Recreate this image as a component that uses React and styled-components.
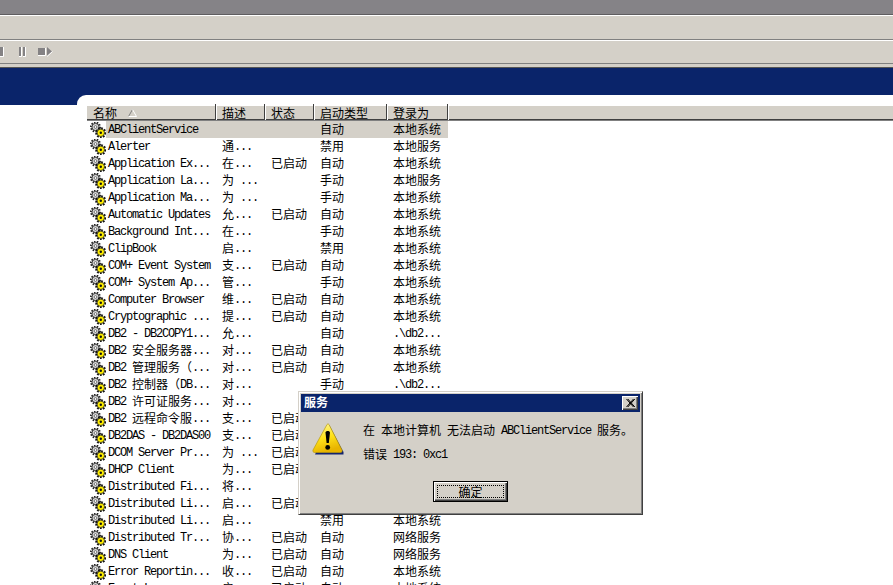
import React from 'react';
import styled, { createGlobalStyle } from 'styled-components';

const CJK = '"Noto Sans CJK SC", "Noto Sans", sans-serif';
const LATIN = '"Liberation Mono", monospace';
const NAVY = '#0a246a';
const FACE = '#d4d0c8';
const COLUMNS = '110px 49px 49px 73px 61px';

const GlobalStyle = createGlobalStyle`
  html, body {
    margin: 0;
    height: 100%;
    overflow: hidden;
    background: #fff;
  }
`;

const Page = styled.div`
  position: relative;
  width: 893px;
  height: 585px;
  overflow: hidden;
  background: #fff;
  color: #000;
  font-family: ${CJK};
  font-size: 12px;
`;

const TitleBand = styled.div`
  height: 14px;
  background: #858387;
  border-bottom: 1px solid #5f5d60;
`;

const MenuBar = styled.div`
  height: 23px;
  background: ${FACE};
  border-top: 1px solid #fff;
  border-bottom: 1px solid #808080;
`;

const ToolBar = styled.div`
  display: flex;
  align-items: center;
  height: 22px;
  background: ${FACE};
  border-top: 1px solid #fff;
  border-bottom: 1px solid #808080;
`;

const ToolGap = styled.span`
  width: ${(p) => p.$width}px;
`;

const ToolBarFoot = styled.div`
  height: 3px;
  background: ${FACE};
  border-bottom: 1px solid #555;
`;

const BlueBand = styled.div`
  height: 27px;
  background: ${NAVY};
`;

const Main = styled.div`
  background: linear-gradient(${NAVY}, ${NAVY}) left top / 92px 10px no-repeat #fff;
`;

const Panel = styled.div`
  margin-left: 77px;
  padding: 11px 0 0 10px;
  background: #fff;
  border-top-left-radius: 9px;
`;

const Header = styled.div`
  display: grid;
  grid-template-columns: 19px 110px 49px 49px 73px 61px 1fr;
  height: 13px;
  background: ${FACE};
  border-bottom: 1px solid #404040;
  box-shadow: 0 1px 0 #808080;
  margin-bottom: 1px;
`;

const HeaderCell = styled.div`
  position: relative;
  grid-column: ${(p) => p.$span || 'auto'};
  display: flex;
  align-items: center;
  gap: 11px;
  padding-left: 6px;
  line-height: 14px;
  white-space: pre;

  &::after {
    content: '';
    display: ${(p) => (p.$last ? 'none' : 'block')};
    position: absolute;
    top: -2px;
    bottom: 0;
    right: -1px;
    width: 2px;
    background: linear-gradient(90deg, #404040 50%, #fff 50%);
  }
`;

const Row = styled.div`
  display: flex;
  height: 17px;
`;

const IconCell = styled.div`
  display: flex;
  align-items: center;
  width: 19px;
  padding-left: 3px;
  box-sizing: border-box;
`;

const Cells = styled.div`
  display: grid;
  grid-template-columns: ${COLUMNS};
  background: ${(p) => (p.$selected ? FACE : 'transparent')};
`;

const Cell = styled.div`
  height: 17px;
  padding-left: ${(p) => (p.$name ? 2 : 6)}px;
  line-height: 15px;
  white-space: pre;
  overflow: hidden;
`;

const Latin = styled.span`
  font-family: ${LATIN};
  font-size: 12px;
  letter-spacing: -1.2px;
  vertical-align: 1px;
`;

const Dialog = styled.div`
  position: absolute;
  left: 298px;
  top: 391px;
  width: 345px;
  height: 124px;
  box-sizing: border-box;
  padding: 2px;
  background: ${FACE};
  border-top: 1px solid ${FACE};
  border-left: 1px solid ${FACE};
  border-right: 1px solid #404040;
  border-bottom: 1px solid #404040;
  box-shadow: inset 1px 1px 0 #fff, inset -1px -1px 0 #808080;
`;

const DialogTitle = styled.div`
  display: flex;
  align-items: center;
  justify-content: space-between;
  height: 18px;
  padding: 0 2px 0 3px;
  background: ${NAVY};
  color: #fff;
  font-weight: 700;
`;

const TitleText = styled.span`
  padding-bottom: 2px;
  line-height: 14px;
`;

const CloseButton = styled.div`
  display: flex;
  align-items: center;
  justify-content: center;
  width: 16px;
  height: 14px;
  background: ${FACE};
  box-shadow: inset 1px 1px 0 #fff, inset -1px -1px 0 #404040, inset -2px -2px 0 #808080;
`;

const DialogBody = styled.div`
  display: flex;
  height: 58px;
  box-sizing: border-box;
  padding: 10px 0 0 11px;
`;

const DialogIcon = styled.div`
  flex: none;
  width: 34px;
  height: 34px;
  margin: 1px 17px 0 0;
`;

const Message = styled.div`
  display: flex;
  flex-direction: column;
  gap: 8px;
`;

const MessageLine = styled.div`
  height: 16px;
  line-height: 16px;
  white-space: pre;
`;

const ButtonRow = styled.div`
  display: flex;
  justify-content: center;
  padding-top: 11px;
`;

const OkButton = styled.div`
  display: flex;
  align-items: center;
  justify-content: center;
  width: 75px;
  height: 21px;
  box-sizing: border-box;
  padding: 3px;
  background: ${FACE};
  border: 1px solid #000;
  box-shadow: inset 1px 1px 0 #fff, inset -1px -1px 0 #404040, inset -2px -2px 0 #808080;
`;

const FocusRing = styled.div`
  flex: 1;
  align-self: stretch;
  display: flex;
  align-items: center;
  justify-content: center;
  border: 1px dotted #000;
  line-height: 13px;
`;

const rows = [
  ['ABClientService', '', '', '自动', '本地系统'],
  ['Alerter', '通...', '', '禁用', '本地服务'],
  ['Application Ex...', '在...', '已启动', '自动', '本地系统'],
  ['Application La...', '为 ...', '', '手动', '本地服务'],
  ['Application Ma...', '为 ...', '', '手动', '本地系统'],
  ['Automatic Updates', '允...', '已启动', '自动', '本地系统'],
  ['Background Int...', '在...', '', '手动', '本地系统'],
  ['ClipBook', '启...', '', '禁用', '本地系统'],
  ['COM+ Event System', '支...', '已启动', '自动', '本地系统'],
  ['COM+ System Ap...', '管...', '', '手动', '本地系统'],
  ['Computer Browser', '维...', '已启动', '自动', '本地系统'],
  ['Cryptographic ...', '提...', '已启动', '自动', '本地系统'],
  ['DB2 - DB2COPY1...', '允...', '', '自动', '.\\db2...'],
  ['DB2 安全服务器...', '对...', '已启动', '自动', '本地系统'],
  ['DB2 管理服务（...', '对...', '已启动', '自动', '本地系统'],
  ['DB2 控制器（DB...', '对...', '', '手动', '.\\db2...'],
  ['DB2 许可证服务...', '对...', '', '', ''],
  ['DB2 远程命令服...', '支...', '已启动', '', ''],
  ['DB2DAS - DB2DAS00', '支...', '已启动', '', ''],
  ['DCOM Server Pr...', '为 ...', '已启动', '', ''],
  ['DHCP Client', '为...', '已启动', '', ''],
  ['Distributed Fi...', '将...', '', '', ''],
  ['Distributed Li...', '启...', '已启动', '', ''],
  ['Distributed Li...', '启...', '', '禁用', '本地系统'],
  ['Distributed Tr...', '协...', '已启动', '自动', '网络服务'],
  ['DNS Client', '为...', '已启动', '自动', '网络服务'],
  ['Error Reportin...', '收...', '已启动', '自动', '本地系统'],
  ['Event Log', '启...', '已启动', '自动', '本地系统'],
];

// SimSun draws latin at half the CJK width, so latin runs get their own face
function Mixed({ text }) {
  const parts = text.split(/([\x20-\x7e]+)/).filter(Boolean);
  return parts.map((part, i) =>
    /^[\x20-\x7e]/.test(part) ? <Latin key={i}>{part}</Latin> : <span key={i}>{part}</span>
  );
}

function GearIcon() {
  return (
    <svg width="16" height="16" viewBox="0 0 16 16">
      <circle cx="5.5" cy="5" r="4.6" fill="none" stroke="#222" strokeWidth="1.8" strokeDasharray="1.5 1.3" />
      <circle cx="5.5" cy="5" r="3.6" fill="#d8d8d8" stroke="#222" strokeWidth="0.9" />
      <circle cx="5.5" cy="5" r="1.4" fill="#fff" stroke="#444" strokeWidth="0.7" />
      <circle cx="10.8" cy="10.8" r="4.5" fill="none" stroke="#111" strokeWidth="2.1" strokeDasharray="1.7 1.3" />
      <circle cx="10.8" cy="10.8" r="3.7" fill="#ffee00" stroke="#222" strokeWidth="0.8" />
      <circle cx="10.8" cy="10.8" r="1.2" fill="#111" />
    </svg>
  );
}

function SortArrow() {
  return (
    <svg width="9" height="8" viewBox="0 0 9 8">
      <path d="M4.5 0.5 L0.5 7.5" stroke="#808080" fill="none" />
      <path d="M4.5 0.5 L8.5 7.5 L0.5 7.5" stroke="#fff" fill="none" />
    </svg>
  );
}

function PartStop() {
  return (
    <svg width="4" height="10" viewBox="0 0 4 10">
      <rect x="0" y="0" width="3" height="9" fill="#848284" />
      <path d="M0 9.5 H3.5 V0" stroke="#fff" fill="none" />
    </svg>
  );
}

function PauseIcon() {
  return (
    <svg width="8" height="10" viewBox="0 0 8 10">
      <rect x="0" y="0" width="2" height="9" fill="#848284" />
      <rect x="4" y="0" width="2" height="9" fill="#848284" />
      <path d="M0 9.5 H2.5 V0 M4 9.5 H6.5 V0" stroke="#fff" fill="none" />
    </svg>
  );
}

function StepIcon() {
  return (
    <svg width="15" height="10" viewBox="0 0 15 10">
      <rect x="0" y="1" width="7" height="7" fill="#848284" />
      <path d="M0 8.5 H7.5 V1" stroke="#fff" fill="none" />
      <path d="M9 0 L14 4.5 L9 9 Z" fill="#848284" />
      <path d="M9 9.5 L14.5 4.5" stroke="#fff" fill="none" />
    </svg>
  );
}

function CloseGlyph() {
  return (
    <svg width="9" height="8" viewBox="0 0 9 8">
      <path d="M0.5 0 L7.5 8 M1.8 0 L8.8 8 M7.5 0 L0.5 8 M8.8 0 L1.8 8" stroke="#000" strokeWidth="1" fill="none" />
    </svg>
  );
}

function WarningIcon() {
  return (
    <svg width="34" height="34" viewBox="0 0 34 34">
      <defs>
        <linearGradient id="warnFill" x1="0" y1="0" x2="0.3" y2="1">
          <stop offset="0" stopColor="#fff9a0" />
          <stop offset="0.55" stopColor="#ffe21a" />
          <stop offset="1" stopColor="#e8b400" />
        </linearGradient>
      </defs>
      <path d="M16 2.5 L17.5 2.5 L31.5 29 L31.5 31.5 L3 31.5 Z" fill="#14246e" />
      <path d="M15 1.5 C15.6 0.8 16.4 0.8 17 1.5 L30 27 C30.4 28.4 29.8 29.5 28.5 29.5 L2.5 29.5 C1.2 29.5 0.6 28.4 1 27 Z" fill="url(#warnFill)" stroke="#b89a10" strokeWidth="0.7" />
      <path d="M13.5 9.5 C13.5 7.4 18 7.4 18 9.5 L16.8 20 L14.6 20 Z" fill="#000" />
      <ellipse cx="15.7" cy="24.4" rx="2.4" ry="2.3" fill="#000" />
    </svg>
  );
}

export default function App() {
  return (
    <Page>
      <GlobalStyle />
      <TitleBand />
      <MenuBar />
      <ToolBar>
        <PartStop />
        <ToolGap $width={15} />
        <PauseIcon />
        <ToolGap $width={11} />
        <StepIcon />
      </ToolBar>
      <ToolBarFoot />
      <BlueBand />
      <Main>
        <Panel>
          <Header>
            <HeaderCell $span="1 / span 2">
              <span>名称</span>
              <SortArrow />
            </HeaderCell>
            <HeaderCell>描述</HeaderCell>
            <HeaderCell>状态</HeaderCell>
            <HeaderCell>启动类型</HeaderCell>
            <HeaderCell>登录为</HeaderCell>
            <HeaderCell $last />
          </Header>
          {rows.map((row, i) => (
            <Row key={i}>
              <IconCell>
                <GearIcon />
              </IconCell>
              <Cells $selected={i === 0}>
                {row.map((text, j) => (
                  <Cell key={j} $name={j === 0}>
                    <Mixed text={text} />
                  </Cell>
                ))}
              </Cells>
            </Row>
          ))}
        </Panel>
      </Main>
      <Dialog>
        <DialogTitle>
          <TitleText>服务</TitleText>
          <CloseButton>
            <CloseGlyph />
          </CloseButton>
        </DialogTitle>
        <DialogBody>
          <DialogIcon>
            <WarningIcon />
          </DialogIcon>
          <Message>
            <MessageLine>
              <Mixed text="在 本地计算机 无法启动 ABClientService 服务。" />
            </MessageLine>
            <MessageLine>
              <Mixed text="错误 193: 0xc1" />
            </MessageLine>
          </Message>
        </DialogBody>
        <ButtonRow>
          <OkButton>
            <FocusRing>确定</FocusRing>
          </OkButton>
        </ButtonRow>
      </Dialog>
    </Page>
  );
}
